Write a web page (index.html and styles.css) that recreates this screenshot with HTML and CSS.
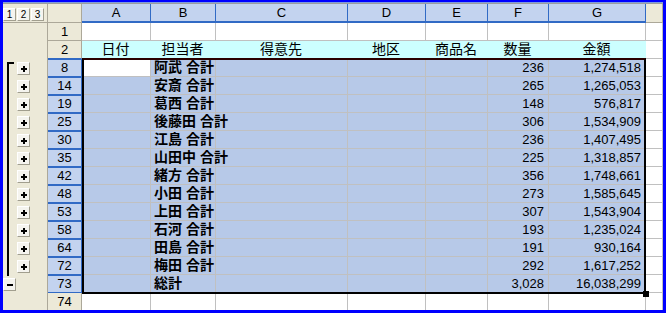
FILE: index.html
```html
<!DOCTYPE html>
<html lang="ja">
<head>
    <meta charset="UTF-8">
    <title>集計</title>
    <link rel="stylesheet" href="styles.css">
</head>
<body>
<div class="sheet">
    <div class="inner">
        <div class="outline">
            <div class="ol-head">
                <div class="ob">1</div>
                <div class="ob">2</div>
                <div class="ob">3</div>
            </div>
            <div class="ol-slot"></div>
            <div class="ol-slot"></div>
            <div class="group">
                <div class="ol-slot sub"><div class="ob plus"></div></div>
                <div class="ol-slot sub"><div class="ob plus"></div></div>
                <div class="ol-slot sub"><div class="ob plus"></div></div>
                <div class="ol-slot sub"><div class="ob plus"></div></div>
                <div class="ol-slot sub"><div class="ob plus"></div></div>
                <div class="ol-slot sub"><div class="ob plus"></div></div>
                <div class="ol-slot sub"><div class="ob plus"></div></div>
                <div class="ol-slot sub"><div class="ob plus"></div></div>
                <div class="ol-slot sub"><div class="ob plus"></div></div>
                <div class="ol-slot sub"><div class="ob plus"></div></div>
                <div class="ol-slot sub"><div class="ob plus"></div></div>
                <div class="ol-slot sub"><div class="ob plus"></div></div>
            </div>
            <div class="ol-slot top"><div class="ob minus"></div></div>
            <div class="ol-slot"></div>
        </div>

        <div class="grid">
            <div class="row hdr">
                <div class="corner"></div>
                <div class="ch sel">A</div>
                <div class="ch sel">B</div>
                <div class="ch sel">C</div>
                <div class="ch sel">D</div>
                <div class="ch sel">E</div>
                <div class="ch sel">F</div>
                <div class="ch sel">G</div>
                <div class="ch"></div>
            </div>
            <div class="row">
                <div class="rh">1</div>
                <div class="c"></div><div class="c"></div><div class="c"></div><div class="c"></div>
                <div class="c"></div><div class="c"></div><div class="c"></div><div class="c"></div>
            </div>
            <div class="row">
                <div class="rh before-sel">2</div>
                <div class="c lbl">日付</div>
                <div class="c lbl">担当者</div>
                <div class="c lbl">得意先</div>
                <div class="c lbl">地区</div>
                <div class="c lbl">商品名</div>
                <div class="c lbl">数量</div>
                <div class="c lbl">金額</div>
                <div class="c"></div>
            </div>
            <div class="row">
                <div class="rh sel">8</div>
                <div class="c"></div>
                <div class="c s name">阿武 合計</div>
                <div class="c s"></div><div class="c s"></div><div class="c s"></div>
                <div class="c s num">236</div>
                <div class="c s num">1,274,518</div>
                <div class="c"></div>
            </div>
            <div class="row">
                <div class="rh sel">14</div>
                <div class="c s"></div>
                <div class="c s name">安斎 合計</div>
                <div class="c s"></div><div class="c s"></div><div class="c s"></div>
                <div class="c s num">265</div>
                <div class="c s num">1,265,053</div>
                <div class="c"></div>
            </div>
            <div class="row">
                <div class="rh sel">19</div>
                <div class="c s"></div>
                <div class="c s name">葛西 合計</div>
                <div class="c s"></div><div class="c s"></div><div class="c s"></div>
                <div class="c s num">148</div>
                <div class="c s num">576,817</div>
                <div class="c"></div>
            </div>
            <div class="row">
                <div class="rh sel">25</div>
                <div class="c s"></div>
                <div class="c s name">後藤田 合計</div>
                <div class="c s"></div><div class="c s"></div><div class="c s"></div>
                <div class="c s num">306</div>
                <div class="c s num">1,534,909</div>
                <div class="c"></div>
            </div>
            <div class="row">
                <div class="rh sel">30</div>
                <div class="c s"></div>
                <div class="c s name">江島 合計</div>
                <div class="c s"></div><div class="c s"></div><div class="c s"></div>
                <div class="c s num">236</div>
                <div class="c s num">1,407,495</div>
                <div class="c"></div>
            </div>
            <div class="row">
                <div class="rh sel">35</div>
                <div class="c s"></div>
                <div class="c s name">山田中 合計</div>
                <div class="c s"></div><div class="c s"></div><div class="c s"></div>
                <div class="c s num">225</div>
                <div class="c s num">1,318,857</div>
                <div class="c"></div>
            </div>
            <div class="row">
                <div class="rh sel">42</div>
                <div class="c s"></div>
                <div class="c s name">緒方 合計</div>
                <div class="c s"></div><div class="c s"></div><div class="c s"></div>
                <div class="c s num">356</div>
                <div class="c s num">1,748,661</div>
                <div class="c"></div>
            </div>
            <div class="row">
                <div class="rh sel">48</div>
                <div class="c s"></div>
                <div class="c s name">小田 合計</div>
                <div class="c s"></div><div class="c s"></div><div class="c s"></div>
                <div class="c s num">273</div>
                <div class="c s num">1,585,645</div>
                <div class="c"></div>
            </div>
            <div class="row">
                <div class="rh sel">53</div>
                <div class="c s"></div>
                <div class="c s name">上田 合計</div>
                <div class="c s"></div><div class="c s"></div><div class="c s"></div>
                <div class="c s num">307</div>
                <div class="c s num">1,543,904</div>
                <div class="c"></div>
            </div>
            <div class="row">
                <div class="rh sel">58</div>
                <div class="c s"></div>
                <div class="c s name">石河 合計</div>
                <div class="c s"></div><div class="c s"></div><div class="c s"></div>
                <div class="c s num">193</div>
                <div class="c s num">1,235,024</div>
                <div class="c"></div>
            </div>
            <div class="row">
                <div class="rh sel">64</div>
                <div class="c s"></div>
                <div class="c s name">田島 合計</div>
                <div class="c s"></div><div class="c s"></div><div class="c s"></div>
                <div class="c s num">191</div>
                <div class="c s num">930,164</div>
                <div class="c"></div>
            </div>
            <div class="row">
                <div class="rh sel">72</div>
                <div class="c s"></div>
                <div class="c s name">梅田 合計</div>
                <div class="c s"></div><div class="c s"></div><div class="c s"></div>
                <div class="c s num">292</div>
                <div class="c s num">1,617,252</div>
                <div class="c"></div>
            </div>
            <div class="row">
                <div class="rh sel">73</div>
                <div class="c s"></div>
                <div class="c s name">総計</div>
                <div class="c s"></div><div class="c s"></div><div class="c s"></div>
                <div class="c s num">3,028</div>
                <div class="c s num">16,038,299</div>
                <div class="c"></div>
            </div>
            <div class="row">
                <div class="rh">74</div>
                <div class="c"></div><div class="c"></div><div class="c"></div><div class="c"></div>
                <div class="c"></div><div class="c"></div><div class="c"></div><div class="c"></div>
            </div>
        </div>
    </div>
    <!-- selected range A8:G73 -->
    <div class="selbox"></div>
</div>
</body>
</html>
```

FILE: styles.css
```css
body {
    margin: 0;
    height: 313px;
    overflow: hidden;
    background: #0000ff;
    font-family: "Liberation Sans", "Noto Sans CJK JP", sans-serif;
    font-size: 13px;
    color: #000;
}
.sheet {
    position: relative;
    box-sizing: border-box;
    width: 660px;
    height: 308px;
    margin: 2px 0 0 3px;
    overflow: hidden;
    background: #fff;
    border-top: 1px solid #7f9ce0;
}
.inner {
    display: flex;
    border-top: 1px solid #9d9d9d;
}

/* outline (group) column */
.outline {
    flex: none;
    box-sizing: border-box;
    width: 45px;
    background: #ece9d8;
    border-right: 1px solid #aca899;
}
.ol-head {
    box-sizing: border-box;
    height: 19px;
    padding-top: 4px;
    display: flex;
    gap: 1px;
    border-bottom: 1px solid #aca899;
}
.ol-slot {
    height: 18px;
    box-sizing: border-box;
}
.ol-slot.sub {
    padding: 3px 0 0 14px;
}
.ol-slot.top {
    padding: 3px 0 0 0;
}
.group {
    position: relative;
}
.group::before {
    content: "";
    position: absolute;
    left: 4px;
    top: 3px;
    bottom: -1px;
    width: 5px;
    border-left: 2px solid #000;
    border-top: 2px solid #000;
}
.ob {
    box-sizing: border-box;
    width: 13px;
    height: 13px;
    background: #f5f4ef;
    border: 1px solid;
    border-color: #fff #a19e8e #a19e8e #fff;
    font-size: 10px;
    line-height: 11px;
    text-align: center;
}
.ob.plus {
    background:
        linear-gradient(#000, #000) center / 6px 2px no-repeat,
        linear-gradient(#000, #000) center / 2px 6px no-repeat,
        #f5f4ef;
}
.ob.minus {
    background:
        linear-gradient(#000, #000) center / 6px 2px no-repeat,
        #f5f4ef;
}

/* cell grid */
.grid {
    flex: none;
    width: 615px;
}
.row {
    display: grid;
    grid-template-columns: 34px 69px 65px 132px 78px 62px 61px 97px 17px;
    height: 18px;
}
.row.hdr {
    height: 19px;
}
.row > div {
    box-sizing: border-box;
    min-width: 0;
    white-space: nowrap;
    overflow: hidden;
}
.corner, .ch, .rh {
    background: #ece9d8;
    border-right: 1px solid #aca899;
    border-bottom: 1px solid #aca899;
    text-align: center;
    line-height: 17px;
}
.ch.sel {
    background: #c3d3ef;
    border-right-color: #316ac5;
    border-bottom: 2px solid #316ac5;
}
.rh.before-sel {
    border-bottom-color: #316ac5;
}
.rh.sel {
    background: #c3d3ef;
    border-right-color: #316ac5;
    border-top: 1px solid #316ac5;
    border-bottom-color: #316ac5;
    line-height: 16px;
}
.c {
    display: flex;
    align-items: flex-end;
    padding: 0 4px 1px 3px;
    line-height: 15px;
    border-right: 1px solid #c0c0c0;
    border-bottom: 1px solid #c0c0c0;
}
.c.s {
    background: #b7c9e8;
}
.c.lbl {
    justify-content: center;
    font-size: 14px;
    background: #ccffff;
    border-right-color: #ccffff;
}
/* long names spill into the empty column C, like in Excel */
.row > .c.name {
    position: relative;
    z-index: 1;
    font-weight: bold;
    font-size: 14px;
    overflow: visible;
}
.c.num {
    justify-content: flex-end;
}
.selbox {
    position: absolute;
    z-index: 2;
    left: 79px;
    top: 55px;
    width: 564px;
    height: 236px;
    box-sizing: border-box;
    border: 2px solid #000;
    border-top-color: #2a0000;
}
.selbox::after {
    content: "";
    position: absolute;
    right: -5px;
    bottom: -5px;
    width: 6px;
    height: 6px;
    background: #000;
}
```
